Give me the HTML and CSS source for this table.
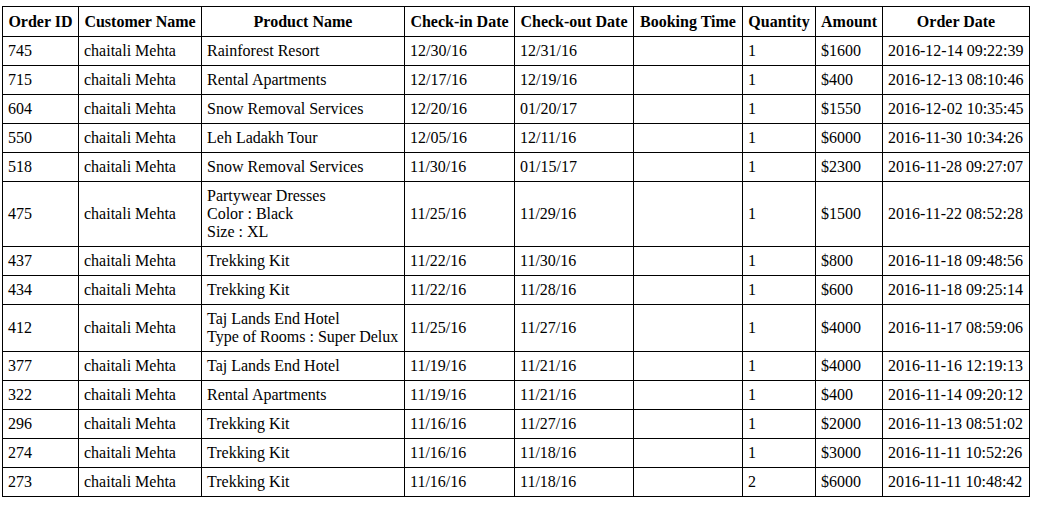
FILE: index.html
```html
<!DOCTYPE html>
<html>
<head>
<meta charset="utf-8">
<link rel="stylesheet" href="styles.css">
</head>
<body>
<table class="orders">
<colgroup>
<col class="c1"><col class="c2"><col class="c3"><col class="c4"><col class="c5"><col class="c6"><col class="c7"><col class="c8"><col class="c9">
</colgroup>
<thead>
<tr><th>Order ID</th><th>Customer Name</th><th>Product Name</th><th>Check-in Date</th><th>Check-out Date</th><th>Booking Time</th><th>Quantity</th><th>Amount</th><th>Order Date</th></tr>
</thead>
<tbody>
<tr><td>745</td><td>chaitali Mehta</td><td>Rainforest Resort</td><td>12/30/16</td><td>12/31/16</td><td></td><td>1</td><td>$1600</td><td>2016-12-14 09:22:39</td></tr>
<tr><td>715</td><td>chaitali Mehta</td><td>Rental Apartments</td><td>12/17/16</td><td>12/19/16</td><td></td><td>1</td><td>$400</td><td>2016-12-13 08:10:46</td></tr>
<tr><td>604</td><td>chaitali Mehta</td><td>Snow Removal Services</td><td>12/20/16</td><td>01/20/17</td><td></td><td>1</td><td>$1550</td><td>2016-12-02 10:35:45</td></tr>
<tr><td>550</td><td>chaitali Mehta</td><td>Leh Ladakh Tour</td><td>12/05/16</td><td>12/11/16</td><td></td><td>1</td><td>$6000</td><td>2016-11-30 10:34:26</td></tr>
<tr><td>518</td><td>chaitali Mehta</td><td>Snow Removal Services</td><td>11/30/16</td><td>01/15/17</td><td></td><td>1</td><td>$2300</td><td>2016-11-28 09:27:07</td></tr>
<tr><td>475</td><td>chaitali Mehta</td><td>Partywear Dresses<br>Color : Black<br>Size : XL</td><td>11/25/16</td><td>11/29/16</td><td></td><td>1</td><td>$1500</td><td>2016-11-22 08:52:28</td></tr>
<tr><td>437</td><td>chaitali Mehta</td><td>Trekking Kit</td><td>11/22/16</td><td>11/30/16</td><td></td><td>1</td><td>$800</td><td>2016-11-18 09:48:56</td></tr>
<tr><td>434</td><td>chaitali Mehta</td><td>Trekking Kit</td><td>11/22/16</td><td>11/28/16</td><td></td><td>1</td><td>$600</td><td>2016-11-18 09:25:14</td></tr>
<tr><td>412</td><td>chaitali Mehta</td><td>Taj Lands End Hotel<br>Type of Rooms : Super Delux</td><td>11/25/16</td><td>11/27/16</td><td></td><td>1</td><td>$4000</td><td>2016-11-17 08:59:06</td></tr>
<tr><td>377</td><td>chaitali Mehta</td><td>Taj Lands End Hotel</td><td>11/19/16</td><td>11/21/16</td><td></td><td>1</td><td>$4000</td><td>2016-11-16 12:19:13</td></tr>
<tr><td>322</td><td>chaitali Mehta</td><td>Rental Apartments</td><td>11/19/16</td><td>11/21/16</td><td></td><td>1</td><td>$400</td><td>2016-11-14 09:20:12</td></tr>
<tr><td>296</td><td>chaitali Mehta</td><td>Trekking Kit</td><td>11/16/16</td><td>11/27/16</td><td></td><td>1</td><td>$2000</td><td>2016-11-13 08:51:02</td></tr>
<tr><td>274</td><td>chaitali Mehta</td><td>Trekking Kit</td><td>11/16/16</td><td>11/18/16</td><td></td><td>1</td><td>$3000</td><td>2016-11-11 10:52:26</td></tr>
<tr><td>273</td><td>chaitali Mehta</td><td>Trekking Kit</td><td>11/16/16</td><td>11/18/16</td><td></td><td>2</td><td>$6000</td><td>2016-11-11 10:48:42</td></tr>
</tbody>
</table>
</body>
</html>
```

FILE: styles.css
```css
html, body {
  margin: 0;
  padding: 0;
  background: #fff;
}
body {
  padding: 6px 0 0 2px;
  font-family: "Liberation Serif", "Times New Roman", serif;
  font-size: 16px;
  color: #000;
}
.orders {
  border-collapse: collapse;
  table-layout: fixed;
  width: 1027px;
  border: 1px solid #000;
}
.orders th,
.orders td {
  border: 1px solid #000;
  padding: 5px 5px;
  line-height: 18px;
  text-align: left;
  vertical-align: middle;
}
.orders th {
  font-weight: bold;
  text-align: center;
  padding: 6px 5px 5px;
  white-space: nowrap;
}
.orders td {
  white-space: nowrap;
}
.c1 { width: 76px; }
.c2 { width: 123px; }
.c3 { width: 203px; }
.c4 { width: 110px; }
.c5 { width: 119px; }
.c6 { width: 109px; }
.c7 { width: 73px; }
.c8 { width: 67px; }
.c9 { width: 147px; }
```
